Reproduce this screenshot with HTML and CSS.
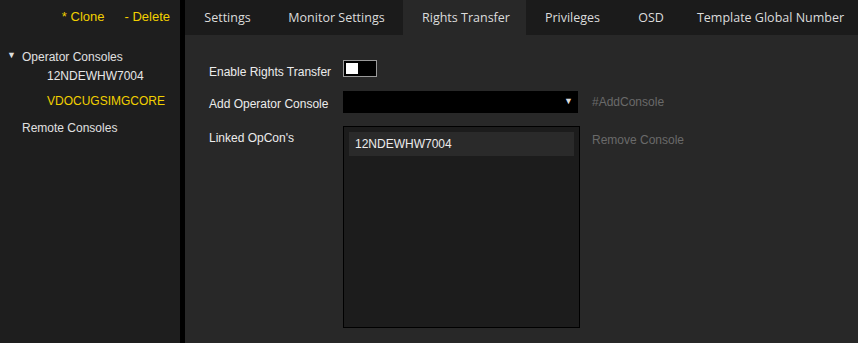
FILE: index.html
```html
<!DOCTYPE html>
<html lang="en">
<head>
    <meta charset="UTF-8">
    <title>Operator Consoles</title>
    <link rel="stylesheet" href="styles.css">
</head>
<body>
    <div class="app">
        <aside class="sidebar">
            <div class="sidebar-actions">
                <span class="action">* Clone</span>
                <span class="action">- Delete</span>
            </div>
            <ul class="tree">
                <li class="tree-group">
                    <div class="tree-head"><span class="caret">&#9660;</span>Operator Consoles</div>
                    <ul class="tree-children">
                        <li>12NDEWHW7004</li>
                        <li class="selected">VDOCUGSIMGCORE</li>
                    </ul>
                </li>
                <li class="tree-group">
                    <div class="tree-head">Remote Consoles</div>
                </li>
            </ul>
        </aside>
        <div class="divider"></div>
        <main class="main">
            <nav class="tabs">
                <div class="tab tab-settings">Settings</div>
                <div class="tab tab-monitor">Monitor Settings</div>
                <div class="tab tab-rights active">Rights Transfer</div>
                <div class="tab tab-priv">Privileges</div>
                <div class="tab tab-osd">OSD</div>
                <div class="tab tab-template">Template Global Number</div>
            </nav>
            <section class="panel">
                <div class="row row-toggle">
                    <label class="label">Enable Rights Transfer</label>
                    <div class="toggle"><span class="knob"></span></div>
                </div>
                <div class="row row-select">
                    <label class="label">Add Operator Console</label>
                    <div class="select"><span class="arrow">&#9660;</span></div>
                    <span class="hint">#AddConsole</span>
                </div>
                <div class="row row-list">
                    <label class="label">Linked OpCon's</label>
                    <div class="listbox">
                        <div class="list-item">12NDEWHW7004</div>
                    </div>
                    <span class="hint">Remove Console</span>
                </div>
            </section>
        </main>
    </div>
</body>
</html>
```

FILE: styles.css
```css
* {
    margin: 0;
    padding: 0;
    box-sizing: border-box;
}

body {
    font-family: "Liberation Sans", Arial, sans-serif;
    font-size: 12px;
    background-color: #282828;
    color: #e6e6e6;
    width: 858px;
    height: 343px;
    overflow: hidden;
}

.app {
    display: flex;
    height: 343px;
}

/* left tree */
.sidebar {
    width: 180px;
    background: #1e1e1e;
    flex-shrink: 0;
}

.sidebar-actions {
    display: flex;
    justify-content: flex-end;
    gap: 20px;
    padding: 9px 10px 0 0;
    height: 35px;
}

.action {
    color: #f2d000;
    font-size: 13px;
}

.tree {
    list-style: none;
    padding-top: 15px;
}

.tree-head {
    padding-left: 22px;
    position: relative;
    height: 16px;
    color: #e0e0e0;
}

.caret {
    position: absolute;
    left: 7px;
    top: 0;
    font-size: 9px;
    color: #ddd;
}

.tree-children {
    list-style: none;
    padding-left: 47px;
    padding-top: 2px;
}

.tree-children li {
    height: 25px;
    line-height: 16px;
    color: #e6e6e6;
}

.tree-children li.selected {
    color: #f2d000;
}

.tree-group + .tree-group {
    margin-top: 3px;
}

.divider {
    width: 5px;
    background: #000;
    flex-shrink: 0;
}

/* right side */
.main {
    flex: 1;
    display: flex;
    flex-direction: column;
}

.tabs {
    display: flex;
    height: 35px;
    background: #1b1b1b;
}

.tab {
    font-family: "Open Sans", "Noto Sans", sans-serif;
    font-size: 12.5px;
    color: #dcdcdc;
    line-height: 35px;
    text-align: center;
    flex-shrink: 0;
}

.tab-settings { width: 85px; }
.tab-monitor { width: 133px; }
.tab-rights { width: 123px; padding-left: 3px; }
.tab-priv { width: 93px; }
.tab-osd { width: 64px; }
.tab-template { width: 175px; }

.tab.active {
    background: #282828;
}

.panel {
    padding: 18px 0 0 24px;
}

.row {
    display: flex;
    align-items: flex-start;
}

.label {
    width: 134px;
    color: #ececec;
    flex-shrink: 0;
}

.row-toggle {
    height: 31px;
    align-items: center;
}

.row-toggle .label {
    padding-top: 7px;
}

.toggle {
    width: 34px;
    height: 17px;
    border: 1px solid #9a9a9a;
    background: #000;
    padding: 2px;
}

.knob {
    display: block;
    width: 12px;
    height: 11px;
    background: #fff;
}

.row-select {
    height: 36px;
    align-items: center;
}

.row-select .label {
    padding-top: 4px;
}

.select {
    width: 235px;
    height: 22px;
    background: #000;
    position: relative;
}

.arrow {
    position: absolute;
    right: 5px;
    top: 5px;
    font-size: 9px;
    color: #ddd;
}

.hint {
    color: #6a6a6a;
    margin-left: 14px;
}

.row-list {
    margin-top: 6px;
}

.row-list .label {
    padding-top: 5px;
}

.row-list .hint {
    padding-top: 7px;
    margin-left: 12px;
}

.listbox {
    width: 237px;
    height: 202px;
    background: #1c1c1c;
    border: 1px solid #000;
    padding: 5px;
}

.list-item {
    height: 24px;
    line-height: 24px;
    background: #2a2a2a;
    padding-left: 6px;
    color: #ececec;
}
```
